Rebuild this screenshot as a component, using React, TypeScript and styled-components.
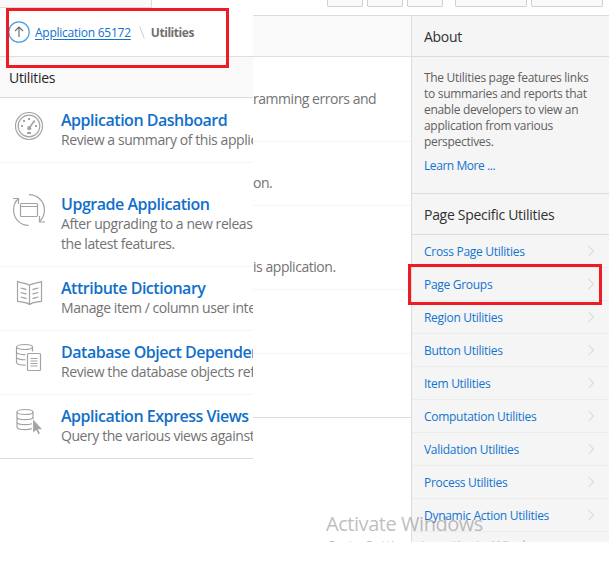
import React from 'react';
import styled, { createGlobalStyle } from 'styled-components';

const GlobalStyle = createGlobalStyle`
  *, *::before, *::after { box-sizing: border-box; }
  body { margin: 0; background: #fff; font-family: 'Open Sans', 'Noto Sans', sans-serif; overflow: hidden; }
`;

const Page = styled.div`
  position: relative;
  display: grid;
  grid-template-columns: 253px 356px;
  align-items: start;
  width: 609px;
  height: 582px;
  overflow: hidden;
  background: #fff;
`;

const LeftPane = styled.section`
  display: flex;
  flex-direction: column;
  overflow: hidden;
`;

const TabStrip = styled.div`
  width: 152px;
  height: 8px;
  background: #f9f9f9;
  border-right: 1px solid #dcdcdc;
  border-bottom: 1px solid #dcdcdc;
`;

const Breadcrumb = styled.nav`
  display: flex;
  align-items: center;
  height: 49px;
  padding-left: 8px;
  border-bottom: 1px solid #dfdfdf;
  font-size: 12px;
  line-height: 16px;
  white-space: nowrap;
`;

const UpIcon = styled.svg`
  flex: none;
  width: 22px;
  height: 22px;
  margin-right: 5px;
`;

const CrumbLink = styled.a`
  padding-top: 2px;
  color: #0f72cf;
  letter-spacing: -0.25px;
  text-decoration: underline;
  text-underline-offset: 2px;
`;

const Slash = styled.svg`
  width: 6px;
  height: 13px;
  margin: 0 6px 0 8px;
`;

const CrumbCurrent = styled.span`
  padding-top: 2px;
  color: #707070;
  font-weight: 700;
  letter-spacing: -0.45px;
`;

const ListHeading = styled.h1`
  display: flex;
  align-items: center;
  height: 41px;
  margin: 0;
  padding-left: 9px;
  background: #f9f9f9;
  border-bottom: 1px solid #dcdcdc;
  color: #262626;
  font-size: 14px;
  font-weight: 400;
  letter-spacing: -0.3px;
`;

const Entry = styled.article<{ $height: number; $top: number; $last?: boolean }>`
  display: grid;
  grid-template-columns: 61px 1fr;
  height: ${p => p.$height}px;
  padding-top: ${p => p.$top}px;
  border-bottom: 1px solid ${p => (p.$last ? '#dcdcdc' : '#f5f5f5')};
  white-space: nowrap;
`;

const EntryIcon = styled.svg`
  width: 36px;
  height: 36px;
  margin: -2px 0 0 11px;
  fill: none;
  stroke: #a3a3a3;
  stroke-width: 1.2;
`;

const EntryTitle = styled.h2`
  margin: 0;
  color: #116fca;
  font-size: 16px;
  line-height: 20px;
  font-weight: 600;
  letter-spacing: -0.48px;
`;

const EntryText = styled.p`
  margin: 0;
  color: #737373;
  font-size: 14px;
  line-height: 20px;
  letter-spacing: -0.43px;
`;

const RightPane = styled.section`
  display: grid;
  grid-template-columns: 158px 198px;
  grid-template-rows: 15px 527px;
`;

const ButtonBar = styled.header`
  grid-column: 1 / -1;
  display: flex;
  align-items: flex-start;
  padding-left: 74px;
`;

const ToolButton = styled.div<{ $width: number; $gap: number }>`
  width: ${p => p.$width}px;
  height: 7px;
  margin-right: ${p => p.$gap}px;
  background: #f9f9f9;
  border: 1px solid #d0d0d0;
  border-top: 0;
  border-radius: 0 0 2px 2px;
`;

const MiddlePane = styled.div`
  display: flex;
  flex-direction: column;
  border-top: 1px solid #dcdcdc;
`;

const MiddleHeading = styled.div`
  height: 41px;
  background: #f9f9f9;
  border-bottom: 1px solid #dfdfdf;
`;

const MiddleRow = styled.div<{ $height: number; $text?: number; $last?: boolean }>`
  height: ${p => p.$height}px;
  padding-top: ${p => p.$text ?? 0}px;
  border-bottom: 1px solid ${p => (p.$last ? '#dcdcdc' : '#f5f5f5')};
  color: #737373;
  font-size: 14px;
  line-height: 20px;
  letter-spacing: -0.46px;
  white-space: nowrap;
`;

const Sidebar = styled.aside`
  overflow: hidden;
  background: #f5f5f5;
  border-top: 1px solid #dcdcdc;
  border-left: 1px solid #dcdcdc;
`;

const SideHeading = styled.h2`
  display: flex;
  align-items: center;
  height: 41px;
  margin: 0;
  padding-left: 12px;
  border-bottom: 1px solid #dcdcdc;
  color: #303030;
  font-size: 14px;
  font-weight: 400;
  letter-spacing: -0.29px;
`;

const About = styled.div`
  height: 137px;
  padding: 13px 0 0 12px;
  border-bottom: 1px solid #dcdcdc;
  color: #5f5f5f;
  font-size: 12px;
  line-height: 16px;
  letter-spacing: -0.3px;
  white-space: nowrap;
`;

const AboutText = styled.p`
  margin: 0 0 8px;
`;

const LearnMore = styled.a`
  color: #1274cf;
  letter-spacing: -0.43px;
`;

const SideLink = styled.a`
  display: flex;
  align-items: center;
  justify-content: space-between;
  height: 33px;
  padding: 1px 14px 0 12px;
  border-bottom: 1px solid #ececec;
  color: #1274cf;
  font-size: 12px;
  letter-spacing: -0.29px;
  white-space: nowrap;
`;

const Chevron = styled.svg`
  width: 8px;
  height: 12px;
  margin-top: -2px;
  fill: none;
  stroke: #dcdcd8;
  stroke-width: 1.1;
`;

const Watermark = styled.div`
  position: absolute;
  left: 326px;
  top: 510px;
  height: 32px;
  overflow: hidden;
  color: rgba(125, 125, 125, 0.5);
  white-space: nowrap;
  pointer-events: none;
`;

const WatermarkTitle = styled.div`
  font-size: 20px;
  line-height: 28px;
  letter-spacing: -0.45px;
`;

const WatermarkHint = styled.div`
  margin-top: -2px;
  font-size: 14px;
  line-height: 20px;
`;

const Highlight = styled.div<{ $x: number; $y: number; $w: number; $h: number }>`
  position: absolute;
  left: ${p => p.$x}px;
  top: ${p => p.$y}px;
  width: ${p => p.$w}px;
  height: ${p => p.$h}px;
  border: 3px solid #ed1c24;
  pointer-events: none;
`;

const Gauge = () => (
  <EntryIcon viewBox="0 0 36 36">
    <circle cx="18" cy="18" r="13.5" />
    <circle cx="18" cy="18" r="10.8" />
    <path d="M18 20.5 22.5 14" strokeWidth="1.5" />
    <g fill="#a3a3a3" stroke="none">
      <circle cx="18.2" cy="20.2" r="2.1" />
      <path d="M17 10h2v2h-2zM12 12h2v2h-2zM22 12.5h2v2h-2zM10 17h2v2h-2zM24 17h2v2h-2zM16 24h4v2h-4z" />
    </g>
  </EntryIcon>
);

const Upgrade = () => (
  <EntryIcon viewBox="0 0 36 36">
    <rect x="9.5" y="11.5" width="17" height="13" rx="1" />
    <path d="M9.5 14.5h17M18 2.6C26.5 2.6 33.4 9.2 33.4 18c0 4.5-1.4 8-4.6 11.3M28.5 24v6h5.5M17.5 33.4C9 33.4 2.6 26.5 2.6 18c0-4.5 1.6-8.6 4.8-11.2M2 6.5h5.5V12" />
  </EntryIcon>
);

const Book = () => (
  <EntryIcon viewBox="0 0 36 36">
    <path d="M18.5 9.3C15.5 7 11 7.5 6.5 5.5v19.8c4.5 1 8.5.6 12 3.2 3.5-2.6 7.5-2.2 12-3.2V5.5c-4.5 2-9 1.5-12 3.8v19.2M9.5 12c2 .8 4.2.6 6 1.8M9.5 16.5c2 .8 4.2.6 6 1.8M9.5 21c2 .8 4.2.6 6 1.8M27.5 12c-2 .8-4.2.6-6 1.8M27.5 16.5c-2 .8-4.2.6-6 1.8M27.5 21c-2 .8-4.2.6-6 1.8" />
  </EntryIcon>
);

const DatabaseDocs = () => (
  <EntryIcon viewBox="0 0 36 36">
    <ellipse cx="13.5" cy="7" rx="8" ry="2.5" />
    <path d="M5.5 7v15.5c0 1.7 4 2.8 9 2.6M21.5 7v4.5M5.5 12c0 1.7 4.5 2.7 9 2.5M5.5 17.2c0 1.7 4.5 2.7 9 2.5" />
    <rect x="16.5" y="13.5" width="13" height="17" rx="1" />
    <path d="M19.5 18.5h7M19.5 21h7M19.5 23.5h7M19.5 26h7" strokeWidth="1" />
  </EntryIcon>
);

const DatabaseCursor = () => (
  <EntryIcon viewBox="0 0 36 36">
    <ellipse cx="14" cy="8" rx="8" ry="2.5" />
    <path d="M6 8v15c0 1.7 4 2.7 8 2.7 3 0 5.5-.4 7-1.2M22 8v7M6 13c0 1.7 4 2.7 8 2.7s8-1 8-2.7M6 18c0 1.7 4 2.7 8 2.7 3 0 5-.3 7-1" />
    <path d="m22 15.5 .2 13 3-2.6 2.2 4.4 1.5-.7-2.2-4.4h4.3z" fill="#a3a3a3" stroke="none" />
  </EntryIcon>
);

const entries = [
  { title: 'Application Dashboard', text: ['Review a summary of this application'], icon: <Gauge />, height: 65, top: 12 },
  { title: 'Upgrade Application', text: ['After upgrading to a new release of', 'the latest features.'], icon: <Upgrade />, height: 104, top: 31 },
  { title: 'Attribute Dictionary', text: ['Manage item / column user interface'], icon: <Book />, height: 64, top: 11 },
  { title: 'Database Object Dependencies', text: ['Review the database objects referenced'], icon: <DatabaseDocs />, height: 64, top: 11 },
  { title: 'Application Express Views', text: ['Query the various views against'], icon: <DatabaseCursor />, height: 64, top: 11 },
];

const utilities = [
  'Cross Page Utilities', 'Page Groups', 'Region Utilities', 'Button Utilities', 'Item Utilities',
  'Computation Utilities', 'Validation Utilities', 'Process Utilities', 'Dynamic Action Utilities',
];

export default function App() {
  return (
    <>
      <GlobalStyle />
      <Page>
        <LeftPane>
          <TabStrip />
          <Breadcrumb>
            <UpIcon viewBox="0 0 22 22" fill="none">
              <circle cx="11" cy="11" r="10.2" stroke="#4b9ee2" strokeWidth="1.2" />
              <path d="M11 16V6M7 10l4-4 4 4" stroke="#706b78" strokeWidth="1.2" />
            </UpIcon>
            <CrumbLink>Application 65172</CrumbLink>
            <Slash viewBox="0 0 6 13"><path d="m.7.5 4.6 12" stroke="#ccc" /></Slash>
            <CrumbCurrent>Utilities</CrumbCurrent>
          </Breadcrumb>
          <ListHeading>Utilities</ListHeading>
          {entries.map((e, i) => (
            <Entry key={e.title} $height={e.height} $top={e.top} $last={i === entries.length - 1}>
              {e.icon}
              <div>
                <EntryTitle>{e.title}</EntryTitle>
                {e.text.map(line => <EntryText key={line}>{line}</EntryText>)}
              </div>
            </Entry>
          ))}
        </LeftPane>
        <RightPane>
          <ButtonBar>
            <ToolButton $width={36} $gap={4} />
            <ToolButton $width={36} $gap={4} />
            <ToolButton $width={36} $gap={12} />
            <ToolButton $width={72} $gap={4} />
            <ToolButton $width={72} $gap={0} />
          </ButtonBar>
          <MiddlePane>
            <MiddleHeading />
            <MiddleRow $height={85} $text={32}>ramming errors and</MiddleRow>
            <MiddleRow $height={64} $text={31}>on.</MiddleRow>
            <MiddleRow $height={84} $text={51}>is application.</MiddleRow>
            <MiddleRow $height={64} />
            <MiddleRow $height={64} $last />
          </MiddlePane>
          <Sidebar>
            <SideHeading>About</SideHeading>
            <About>
              <AboutText>
                The Utilities page features links<br />
                to summaries and reports that<br />
                enable developers to view an<br />
                application from various<br />
                perspectives.
              </AboutText>
              <LearnMore>Learn More ...</LearnMore>
            </About>
            <SideHeading>Page Specific Utilities</SideHeading>
            {utilities.map(name => (
              <SideLink key={name}>
                {name}
                <Chevron viewBox="0 0 8 12"><path d="m1.5.8 5 5.2-5 5.2" /></Chevron>
              </SideLink>
            ))}
          </Sidebar>
        </RightPane>
        <Watermark>
          <WatermarkTitle>Activate Windows</WatermarkTitle>
          <WatermarkHint>Go to Settings to activate Windows.</WatermarkHint>
        </Watermark>
        <Highlight $x={6} $y={8} $w={223} $h={60} />
        <Highlight $x={408} $y={264} $w={194} $h={41} />
      </Page>
    </>
  );
}
